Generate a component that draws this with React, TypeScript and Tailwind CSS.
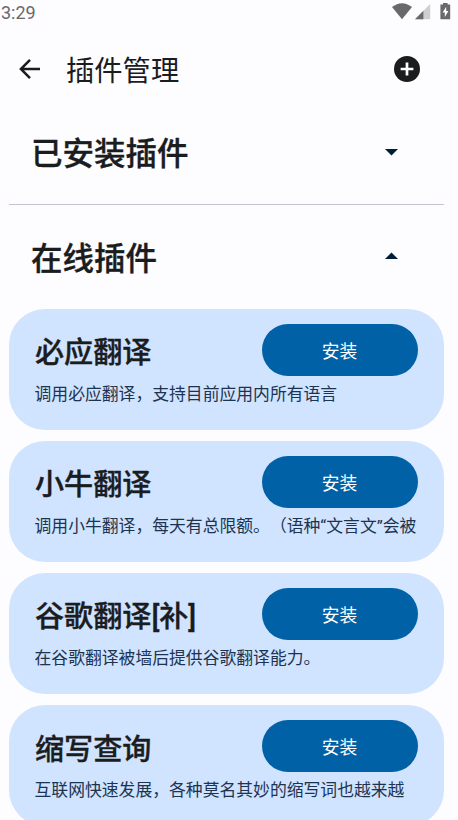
import React, { useState } from 'react';

interface Plugin {
  name: string;
  desc: string;
}

const onlinePlugins: Plugin[] = [
  { name: '必应翻译', desc: '调用必应翻译，支持目前应用内所有语言' },
  { name: '小牛翻译', desc: '调用小牛翻译，每天有总限额。（语种“文言文”会被' },
  { name: '谷歌翻译[补]', desc: '在谷歌翻译被墙后提供谷歌翻译能力。' },
  { name: '缩写查询', desc: '互联网快速发展，各种莫名其妙的缩写词也越来越' },
];

const StatusBar = () => (
  <div className="flex h-6 shrink-0 items-start justify-between pl-px pr-[7px] text-[#69696b]">
    <span className="text-[18px] leading-[25px]">3:29</span>
    <div className="flex items-start pt-[3px]">
      <svg width="20" height="17" viewBox="0 0 20 17" fill="currentColor">
        <path d="M0 4Q10-3.6 20 4L10 16.2Z" />
      </svg>
      <svg className="ml-[3px] mt-px" width="16" height="16" viewBox="0 0 16 16" fill="currentColor">
        <path d="M0 15.2 15.2 0V15.2Z" fill="#cfcfd1" />
        <path d="M0 15.2 8.4 6.8V15.2Z" />
      </svg>
      <svg className="ml-[9px]" width="11" height="17" viewBox="0 0 11 17">
        <path d="M3 0h4.6v1.6h2.6v14.6H.4V1.6H3Z" fill="currentColor" />
        <path d="M6.2 3.8 2.6 9.5h2.2v4.4l3.6-5.8H6.2Z" fill="#fff" />
      </svg>
    </div>
  </div>
);

const PluginCard: React.FC<{ plugin: Plugin }> = ({ plugin }) => (
  <div className="h-[121.3px] shrink-0 rounded-[36px] bg-[#d0e3ff] pl-[26.5px] pr-[26px] pt-[15px]">
    <div className="flex h-[52px] items-center justify-between">
      <h3 className="whitespace-nowrap pt-[7px] text-[29.1px] font-medium leading-9 [-webkit-text-stroke:0.35px]">{plugin.name}</h3>
      <button className="h-[52px] w-[156px] rounded-full bg-[#0061a6] pt-[5px] text-[17.8px] text-white">安装</button>
    </div>
    <p className="mt-[6px] -ml-[0.5px] whitespace-nowrap text-[16.82px] leading-6 text-[#1c3450]">{plugin.desc}</p>
  </div>
);

export default function App() {
  const [showInstalled, setShowInstalled] = useState(false);
  const [showOnline, setShowOnline] = useState(true);

  return (
    <div className="flex h-[820px] w-[458px] flex-col overflow-hidden bg-[#fdfcff] font-[Roboto,'Noto_Sans_CJK_SC',sans-serif] text-[#1a1c1e] [text-spacing-trim:space-all]">
      <StatusBar />

      <header className="flex h-[90px] shrink-0 items-center pl-[19px] pr-[38px]">
        <button>
          <svg width="21" height="20" viewBox="0 0 21 20" fill="none" stroke="currentColor" strokeWidth="2.5">
            <path d="M21 10H2M11 .9 1.9 10l9.1 9.1" />
          </svg>
        </button>
        <h1 className="ml-[26px] pt-[5px] text-[28.3px] leading-9">插件管理</h1>
        <button className="ml-auto">
          <svg width="26" height="26" viewBox="0 0 26 26">
            <circle cx="13" cy="13" r="13" fill="#1a1c1e" />
            <path d="M13 6.6v12.8M6.6 13h12.8" stroke="#fff" strokeWidth="2.7" />
          </svg>
        </button>
      </header>

      <button
        className="flex h-[76px] shrink-0 items-center justify-between pl-[31px] pr-[60px]"
        onClick={() => setShowInstalled(!showInstalled)}
      >
        <span className="pt-[5px] text-[31.5px] font-medium leading-10 [-webkit-text-stroke:0.35px]">已安装插件</span>
        <svg className={showInstalled ? 'rotate-180' : ''} width="13" height="7" viewBox="0 0 13 7">
          <path d="M0 0h13L6.5 6.5Z" fill="#001d36" />
        </svg>
      </button>

      <div className="ml-[9px] mr-[14px] mt-[13.5px] h-[1.5px] shrink-0 bg-[#c5c4cc]" />

      <button
        className="flex h-[103.5px] shrink-0 items-center justify-between pl-[31px] pr-[60px]"
        onClick={() => setShowOnline(!showOnline)}
      >
        <span className="pt-[7px] text-[31.5px] font-medium leading-10 [-webkit-text-stroke:0.35px]">在线插件</span>
        <svg className={showOnline ? '-translate-y-px rotate-180' : ''} width="13" height="7" viewBox="0 0 13 7">
          <path d="M0 0h13L6.5 6.5Z" fill="#001d36" />
        </svg>
      </button>

      {showOnline && (
        <div className="flex flex-col gap-[10.9px] pl-[8.5px] pr-[14.5px]">
          {onlinePlugins.map(p => (
            <PluginCard key={p.name} plugin={p} />
          ))}
        </div>
      )}
    </div>
  );
}
